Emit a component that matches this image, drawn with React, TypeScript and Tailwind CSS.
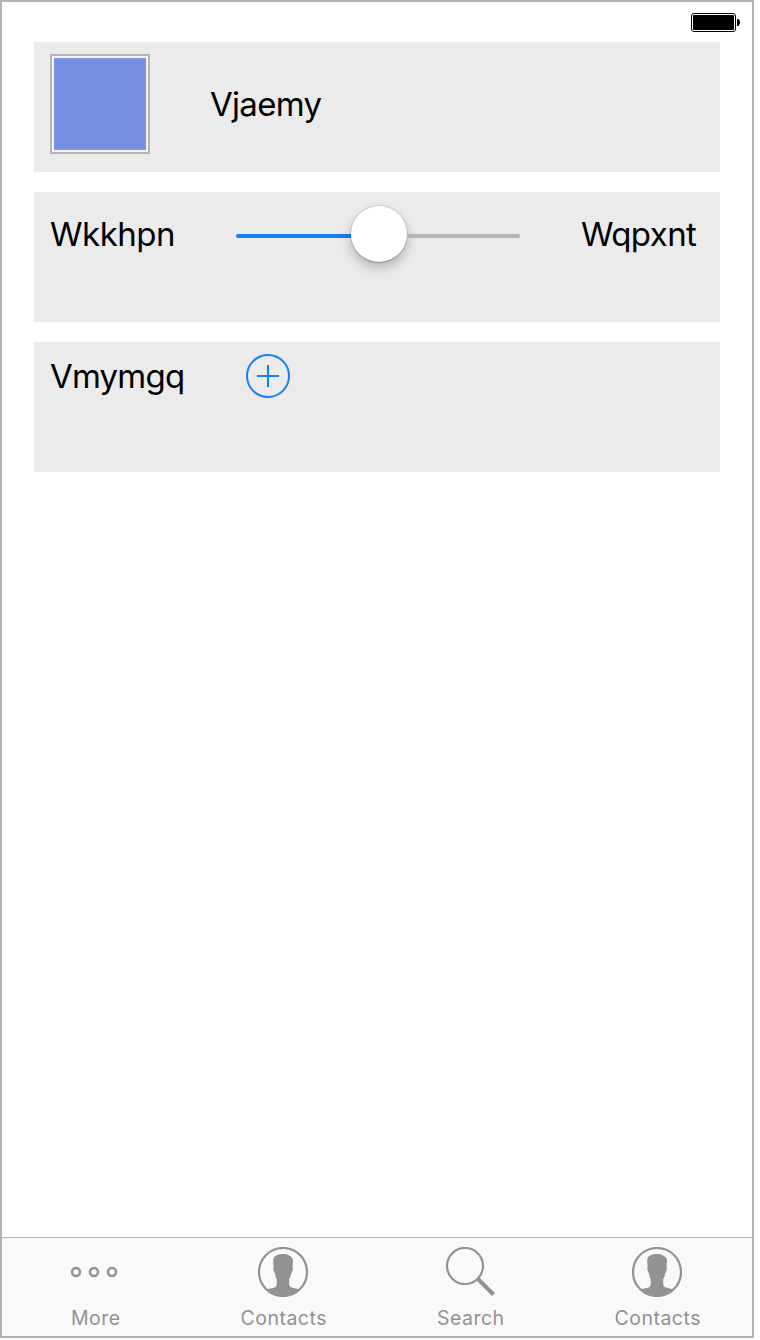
import type { ReactNode } from 'react';

function Battery() {
  return (
    <svg width="50" height="20" viewBox="0 0 50 20" aria-hidden="true">
      <rect x="0.5" y="0.5" width="44" height="18" rx="2.5" fill="#fff" stroke="#000" />
      <rect x="2" y="2" width="41" height="15" rx="1" fill="#000" />
      <path d="M46 6h1.2c1.1.6 1.8 1.9 1.8 3.5s-.7 2.900-1.800 3.500H46z" fill="#000" />
    </svg>
  );
}

function ContactIcon() {
  return (
    <svg width="50" height="50" viewBox="0 0 50 50" aria-hidden="true">
      <circle cx="25" cy="25" r="24" fill="none" stroke="#929292" strokeWidth="2.200" />
      <path
        d="M25 7C20 7 16 8.500 15.400 12C15.100 14.500 15.300 17 15.700 19.500C15 20 15.200 22 15.900 24C16.200 25.500 16.500 26.400 17.100 26.600C17.300 29 17.700 30.500 18.700 32V37C18.700 39.400 17.500 40.300 15 41L9 42.300A24.500 24.500 0 0 0 41 42.300L35.500 41C32.800 40.300 31.200 39.400 31.200 37V32C32.300 30.500 32.800 29 33 26.600C33.600 26.400 34 25.200 34.300 24C35 21.900 35.100 20 34.500 19.500C34.900 17 35.100 14.300 34.700 12C34.100 9.500 31.500 9.400 30.800 8.300C29.500 7.300 27.500 7 25 7Z"
        fill="#929292"
      />
    </svg>
  );
}

function MoreIcon() {
  return (
    <svg width="50" height="50" viewBox="0 0 50 50" fill="none" stroke="#929292" strokeWidth="2.500" aria-hidden="true">
      <circle cx="6" cy="25" r="4" />
      <circle cx="24" cy="25" r="4" />
      <circle cx="42" cy="25" r="4" />
    </svg>
  );
}

function SearchIcon() {
  return (
    <svg width="50" height="50" viewBox="0 0 50 50" fill="none" stroke="#929292" aria-hidden="true">
      <circle cx="20" cy="19" r="18" strokeWidth="2.200" />
      <path d="M33 32L48.500 47.500" strokeWidth="4" />
    </svg>
  );
}

function Tab({ label, children }: { label: string; children: ReactNode }) {
  return (
    <button className="flex flex-col items-center pt-[9px]">
      {children}
      <span className="mt-[9px] pl-[1.5px] text-[19.500px] leading-6 tracking-[0.500px]">{label}</span>
    </button>
  );
}

export default function App() {
  return (
    <div className="h-[1340px] w-[760px] bg-white font-['Inter',sans-serif] text-black">
      <main className="flex h-[1338px] w-[754px] flex-col border-2 border-[#b3b3b3]">
        <header className="flex h-10 shrink-0 justify-end pt-[11px] pr-[11px]">
          <Battery />
        </header>
        <div className="flex flex-col gap-5 pr-8 pl-8 text-[33px] leading-10">
          <section className="flex h-[130px] bg-[#ebebeb] pt-3 pl-4">
            <div className="h-[100px] w-[100px] border-2 border-[#b5b5b5] bg-[#f3f4fa] p-[2px]">
              <div className="h-full w-full border border-[#8298e4] bg-[#758fe2]" />
            </div>
            <span className="mt-[30px] ml-[60px] tracking-[-0.700px]">Vjaemy</span>
          </section>
          <section className="flex h-[130px] bg-[#ebebeb] pt-[14px] pl-4">
            <span className="mt-2 w-[186px] tracking-[-0.500px]">Wkkhpn</span>
            <div className="flex h-[56px] w-[284px] items-center">
              <div className="mt-1 h-1 w-[115px] rounded-l-full bg-[#157efb]" />
              <div className="h-[56px] w-[56px] shrink-0 rounded-full bg-white shadow-[0_0_1px_1px_rgba(0,0,0,0.10),0_1px_1px_rgba(0,0,0,0.15),0_6px_12px_rgba(0,0,0,0.24)]" />
              <div className="mt-1 h-1 flex-1 rounded-r-full bg-[#b5b5b5]" />
            </div>
            <span className="mt-2 ml-[61px] tracking-[-0.600px]">Wqpxnt</span>
          </section>
          <section className="flex h-[130px] bg-[#ebebeb] pt-3 pl-4">
            <span className="mt-[2px] w-[196px] tracking-[-0.800px]">Vmymgq</span>
            <button aria-label="Add" className="h-11 w-11">
              <svg width="44" height="44" viewBox="0 0 44 44" fill="none" stroke="#157efb" strokeWidth="2">
                <circle cx="22" cy="22" r="21" />
                <path d="M11 22H33M22 11V33" />
              </svg>
            </button>
          </section>
        </div>
        <nav className="mt-auto grid h-[99px] grid-cols-[186px_190px_184px_190px] border-t border-[#b3b3b3] bg-[#f9f9f9] text-[#929292]">
          <Tab label="More"><MoreIcon /></Tab>
          <Tab label="Contacts"><ContactIcon /></Tab>
          <Tab label="Search"><SearchIcon /></Tab>
          <Tab label="Contacts"><ContactIcon /></Tab>
        </nav>
      </main>
    </div>
  );
}
